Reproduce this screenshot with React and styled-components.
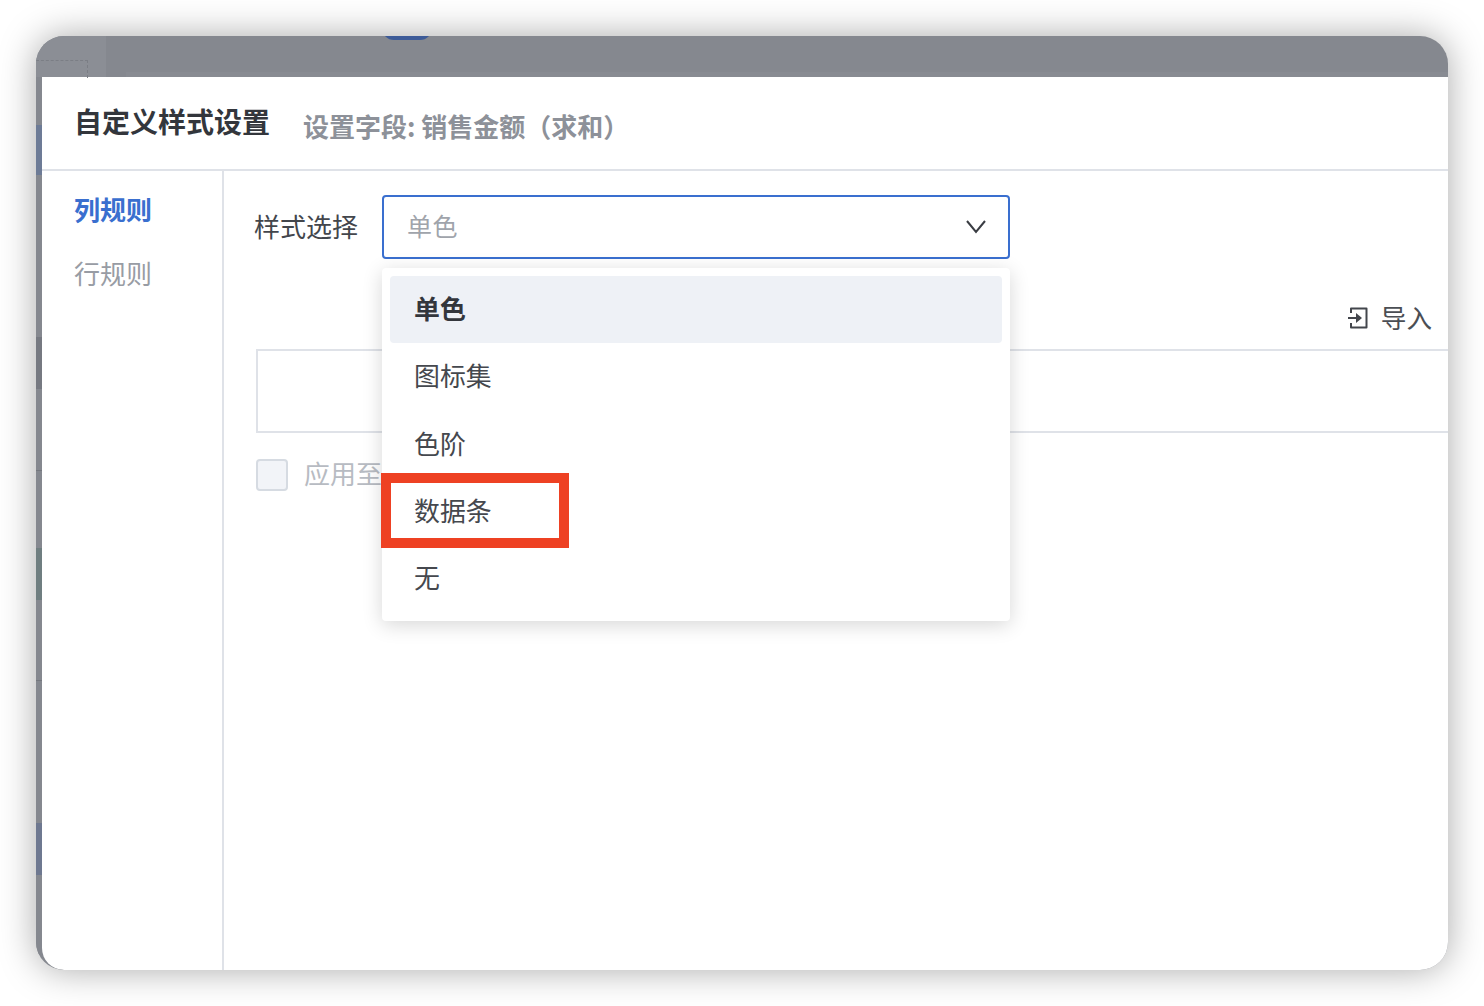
import React from 'react';
import styled, { createGlobalStyle } from 'styled-components';

const Global = createGlobalStyle`
  html, body { margin: 0; padding: 0; background: #fff; }
  body { font-family: "Noto Sans CJK SC", "Noto Sans", sans-serif; }
`;
const Stage = styled.div`
  width: 1484px; height: 1006px; padding: 36px; box-sizing: border-box; overflow: hidden;
`;
const Win = styled.div`
  position: relative; width: 1412px; height: 934px; border-radius: 28px; overflow: hidden;
  background: #85888f; box-shadow: 0 0 36px rgba(0,0,0,.34);
  display: flex; flex-direction: column;
`;
const TopBar = styled.div`
  height: 41px; flex: none; display: flex;
`;
const SideSlab = styled.div`
  width: 70px; background: #8b8e95; position: relative;
`;
const Dashed = styled.div`
  position: absolute; left: 0; top: 24px; width: 51px; height: 17px;
  border-top: 1px dashed #7b7e85; border-right: 1px dashed #7b7e85;
`;
const TopMain = styled.div`
  flex: 1; position: relative;
`;
const Inset = styled.div`
  position: absolute; left: 20px; right: 0; bottom: 0; height: 5px; background: #888b92;
`;
const Pill = styled.div`
  position: absolute; left: 276px; top: -20px; width: 50px; height: 24px; border-radius: 12px; background: #3d5b98;
`;
const Rest = styled.div`
  flex: 1; display: flex; min-height: 0;
`;
const Strip = styled.div`
  width: 6px; flex: none; display: flex; flex-direction: column;
`;
const Band = styled.div`
  height: ${p => p.$h}px; background: ${p => p.$c};
`;
const Dialog = styled.div`
  flex: 1; background: #fff; border-bottom-left-radius: 22px; display: flex; flex-direction: column; min-width: 0;
`;
const Header = styled.div`
  height: 92px; flex: none; border-bottom: 2px solid #dfe2e8;
  display: flex; align-items: flex-start; padding-left: 32px;
`;
const Title = styled.div`
  font-size: 28px; font-weight: 700; color: #33363c; line-height: 40px; margin-top: 24px; white-space: nowrap;
`;
const Sub = styled.div`
  font-size: 26px; font-weight: 700; color: #8d9199; line-height: 38px; margin: 30px 0 0 33px; white-space: nowrap;
`;
const Body = styled.div`
  flex: 1; display: flex; min-height: 0;
`;
const Side = styled.div`
  width: 148px; flex: none; border-right: 2px solid #dfe2e8; padding: 6px 0 0 32px;
`;
const SideItem = styled.div`
  font-size: 26px; line-height: 64px; height: 64px; white-space: nowrap;
  font-weight: ${p => (p.$active ? 700 : 400)};
  color: ${p => (p.$active ? '#3a6fcf' : '#989ca4')};
`;
const Main = styled.div`
  flex: 1; min-width: 0; position: relative; padding: 24px 0 0 31px;
`;
const FieldRow = styled.div`
  display: flex; align-items: center; height: 64px;
`;
const Label = styled.div`
  width: 127px; flex: none; font-size: 26px; color: #43464c; white-space: nowrap; margin: -4px 0 0 -1px; padding-right: 1px;
`;
const Select = styled.div`
  width: 628px; height: 64px; box-sizing: border-box; border: 2px solid #3a6fcf; border-radius: 4px;
  display: flex; align-items: center; justify-content: space-between; padding: 0 22px 0 23px;
`;
const Placeholder = styled.span`
  font-size: 25px; letter-spacing: 0.4px; color: #a0a4ab; line-height: 1; margin-top: -3px;
`;
const ImportRow = styled.div`
  height: 34px; display: flex; align-items: center; justify-content: flex-end; padding: 42px 16px 14px 0; gap: 13px;
`;
const ImportText = styled.span`
  font-size: 25.6px; line-height: 34px; color: #4b4e54; margin-top: -3px;
`;
const TableBox = styled.div`
  height: 84px; box-sizing: border-box; border: 2px solid #dfe2e8; border-right: none;
  margin-left: 1px;
`;
const CheckRow = styled.div`
  display: flex; align-items: center; gap: 16px; margin: 26px 0 0 1px; height: 32px;
`;
const Check = styled.div`
  width: 32px; height: 32px; box-sizing: border-box; border: 2px solid #d6dbe2; border-radius: 4px; background: #f2f4f8;
`;
const CheckText = styled.span`
  font-size: 26px; color: #b7bbc2; white-space: nowrap; margin-top: -5px;
`;
const Menu = styled.div`
  position: absolute; left: 158px; top: 97px; width: 628px; height: 353px; box-sizing: border-box;
  padding: 8px; background: #fff; border-radius: 4px; box-shadow: 0 4px 20px rgba(0,0,0,.16);
`;
const MenuItem = styled.div`
  height: 67.25px; box-sizing: border-box; display: flex; align-items: center; padding: 0 0 4px 24px; border-radius: 4px;
  font-size: 25.9px; white-space: nowrap;
  color: ${p => (p.$sel ? '#33363c' : '#45484e')};
  font-weight: ${p => (p.$sel ? 700 : 400)};
  background: ${p => (p.$sel ? '#eef1f6' : 'transparent')};
  position: relative;
`;
const Highlight = styled.div`
  position: absolute; left: -9px; top: -5px; width: 188px; height: 75px; box-sizing: border-box;
  border: 10px solid #ee4123;
`;

const G = '#85888f';
const bands = [
  [G, 48], ['#6d7b96', 50], [G, 162], ['#767981', 52], [G, 81], ['#74777e', 1], [G, 77],
  ['#6f7e80', 52], [G, 80], ['#74777e', 1], [G, 142], ['#6e7890', 52], [G, 80],
];

export default function App() {
  return (
    <>
      <Global />
      <Stage>
        <Win>
          <TopBar>
            <SideSlab><Dashed /></SideSlab>
            <TopMain><Inset /><Pill /></TopMain>
          </TopBar>
          <Rest>
            <Strip>{bands.map(([c, h], i) => <Band key={i} $c={c} $h={h} />)}</Strip>
            <Dialog>
              <Header>
                <Title>自定义样式设置</Title>
                <Sub>设置字段: 销售金额（求和）</Sub>
              </Header>
              <Body>
                <Side>
                  <SideItem $active>列规则</SideItem>
                  <SideItem>行规则</SideItem>
                </Side>
                <Main>
                  <FieldRow>
                    <Label>样式选择</Label>
                    <Select>
                      <Placeholder>单色</Placeholder>
                      <svg width="20" height="14" viewBox="0 0 20 14" fill="none" stroke="#3a3d43" strokeWidth="2">
                        <path d="M1 1l9 11 9-11" />
                      </svg>
                    </Select>
                  </FieldRow>
                  <ImportRow>
                    <svg width="20" height="22" viewBox="0 0 20 22" fill="none" stroke="#43464c" strokeWidth="2" strokeLinejoin="round">
                      <path d="M3 6V1.5h15.5v19H3V16" />
                      <path d="M0 11h10" />
                      <path d="M8 6l6 5-6 5z" fill="#43464c" stroke="none" />
                    </svg>
                    <ImportText>导入</ImportText>
                  </ImportRow>
                  <TableBox />
                  <CheckRow>
                    <Check />
                    <CheckText>应用至</CheckText>
                  </CheckRow>
                  <Menu>
                    <MenuItem $sel>单色</MenuItem>
                    <MenuItem>图标集</MenuItem>
                    <MenuItem>色阶</MenuItem>
                    <MenuItem>数据条<Highlight /></MenuItem>
                    <MenuItem>无</MenuItem>
                  </Menu>
                </Main>
              </Body>
            </Dialog>
          </Rest>
        </Win>
      </Stage>
    </>
  );
}
